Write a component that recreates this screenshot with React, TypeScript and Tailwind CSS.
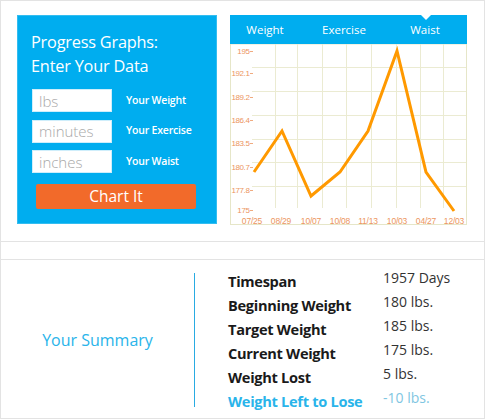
import React from 'react';

const points = [
  [24, 128],
  [52, 87],
  [81, 152],
  [110, 128],
  [138, 87],
  [167, 7],
  [196, 128],
  [224, 167],
];

const xLabels = ['07/25', '08/29', '10/07', '10/08', '11/13', '10/03', '04/27', '12/03'];
const xLabelPos = [22, 51, 81, 110, 138, 167, 196, 224];
const yLabels: [string, number][] = [
  ['195', 7],
  ['192.1', 29],
  ['189.2', 53],
  ['186.4', 76],
  ['183.5', 99],
  ['180.7', 123],
  ['177.8', 146],
  ['175', 166],
];
const vGrid = [45, 67, 92, 116, 141, 166, 190, 213];
const hGrid = [23, 47, 71, 95, 118, 142];

const summary: [string, string][] = [
  ['Timespan', '1957 Days'],
  ['Beginning Weight', '180 lbs.'],
  ['Target Weight', '185 lbs.'],
  ['Current Weight', '175 lbs.'],
  ['Weight Lost', '5 lbs.'],
];

const Chart = () => (
  <svg width="237" height="181" viewBox="0 0 237 181" className="block">
    <rect x="0.5" y="0" width="236" height="180.5" fill="white" stroke="#e6e6c8" />
    {vGrid.map((x) => (
      <line key={x} x1={x + 0.5} y1="0" x2={x + 0.5} y2="164" stroke="#ebebd2" />
    ))}
    {hGrid.map((y) => (
      <line key={y} x1="22" y1={y + 0.5} x2="236" y2={y + 0.5} stroke="#ebebd2" />
    ))}
    {yLabels.map(([t, y]) => (
      <g key={t}>
        <text
          x="19.5"
          y={y + 3}
          textAnchor="end"
          fontSize="8"
          letterSpacing="-0.4"
          fill="#ec9560"
          fontFamily="Liberation Sans, sans-serif"
        >
          {t}
        </text>
        <line x1="20" y1={y + 0.5} x2="23" y2={y + 0.5} stroke="#ec9560" strokeWidth="0.8" />
      </g>
    ))}
    {xLabels.map((t, i) => (
      <text
        key={i}
        x={xLabelPos[i]}
        y="179.5"
        textAnchor="middle"
        fontSize="8.5"
        letterSpacing="-0.2"
        fill="#ec9560"
        fontFamily="Liberation Sans, sans-serif"
      >
        {t}
      </text>
    ))}
    <polyline
      points={points.map((p) => p.join(',')).join(' ')}
      fill="none"
      stroke="#ff9900"
      strokeWidth="3"
      strokeLinejoin="miter"
    />
  </svg>
);

const App = () => {
  return (
    <div className="w-[485px] h-[419px] bg-white border border-[#e3e3e3] font-['Open_Sans',sans-serif] overflow-hidden">
      <div className="h-[241px] border-b border-[#e3e3e3] flex items-start pl-[16px] pt-[14px]">
        {/* Data entry panel */}
        <div className="w-[200px] h-[209px] bg-[#00adef] border border-[#33bdf0] pl-[13px] pt-[14px]">
          <h2 className="text-white text-[16.3px] leading-[24px] tracking-[-0.2px]">
            Progress Graphs:
            <br />
            Enter Your Data
          </h2>
          <div className="mt-[11px] ml-[1px] flex flex-col gap-[7.5px]">
            {[
              ['lbs', 'Your Weight'],
              ['minutes', 'Your Exercise'],
              ['inches', 'Your Waist'],
            ].map(([ph, label]) => (
              <div key={label} className="flex items-center">
                <input
                  placeholder={ph}
                  className="w-[80px] h-[23px] bg-white border border-[#cfeefb] px-[6px] text-[15px] font-light text-[#888] placeholder:text-[#a8a8a8] outline-none"
                />
                <span className="ml-[14px] text-white text-[10.5px] font-semibold tracking-[-0.2px]">{label}</span>
              </div>
            ))}
          </div>
          <button className="mt-[11px] ml-[5px] w-[160px] h-[25px] bg-[#f26a2a] rounded-[2px] text-white text-[15.5px] leading-[25px]">
            Chart It
          </button>
        </div>

        {/* Chart */}
        <div className="ml-[13px] w-[237px]">
          <div className="relative h-[29px] bg-[#00adef] flex items-center text-white text-[11.5px]">
            <span className="absolute left-[191px] top-0 w-0 h-0 border-l-[5px] border-r-[5px] border-t-[5px] border-l-transparent border-r-transparent border-t-white" />
            <span className="w-[70px] text-center">Weight</span>
            <span className="w-[88px] text-center">Exercise</span>
            <span className="w-[74px] text-center">Waist</span>
          </div>
          <Chart />
        </div>
      </div>
      <div className="h-[18px] border-b border-[#e3e3e3]" />

      {/* Summary */}
      <div className="flex items-start pt-[6px]">
        <div className="mt-[7px] w-[193px] h-[134px] flex items-center justify-center text-[#29b4ea] text-[16px]">
          Your Summary
        </div>
        <div className="mt-[7px] w-px h-[134px] bg-[#29abe2]" />
        <div className="pl-[33px]">
          {summary.map(([k, v]) => (
            <div key={k} className="flex h-[24px] items-start">
              <span className="w-[155px] pt-[3px] text-[14.6px] leading-[24px] font-bold text-[#1a1a1a] tracking-[-0.3px]">
                {k}
              </span>
              <span className="text-[14px] leading-[24px] text-[#333]">{v}</span>
            </div>
          ))}
          <div className="flex h-[24px] items-start">
            <span className="w-[155px] pt-[3px] text-[14.6px] leading-[24px] font-bold text-[#29b4ea] tracking-[-0.3px] whitespace-nowrap">
              Weight Left to Lose
            </span>
            <span className="text-[14px] leading-[24px] text-[#7fc6e2]">-10 lbs.</span>
          </div>
        </div>
      </div>
    </div>
  );
};

export default App;
